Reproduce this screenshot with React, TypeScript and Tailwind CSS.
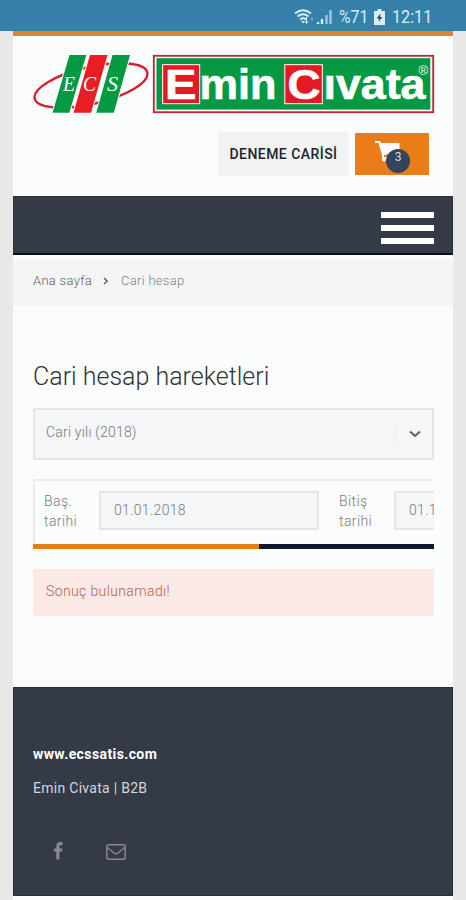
import React from 'react';

const Logo: React.FC = () => (
  <svg className="block h-[60px] w-[402px]" viewBox="33 54 402 60" aria-label="Emin Civata">
    <ellipse
      cx="91"
      cy="85.5"
      rx="57.8"
      ry="18.5"
      fill="none"
      stroke="#d3202b"
      strokeWidth="2.4"
      transform="rotate(-13 91 85.5)"
    />
    <g stroke="#fbfdfc" strokeWidth="2" paintOrder="stroke">
      <path d="M69.5 55H86.3L69.3 112.7H52.5Z" fill="#069944" />
      <path d="M90 55H107.5L91 112.7H73.5Z" fill="#ea1d25" />
      <path d="M112.5 55H130L113.8 112.7H96.3Z" fill="#069944" />
    </g>
    <g fill="#fff" fontFamily="'Liberation Serif', serif" fontStyle="italic" fontSize="20">
      <text x="63" y="90.5" textLength="12" lengthAdjust="spacingAndGlyphs">E</text>
      <text x="83" y="90.5" textLength="13" lengthAdjust="spacingAndGlyphs">C</text>
      <text x="107" y="90.5" textLength="11" lengthAdjust="spacingAndGlyphs">S</text>
    </g>

    <rect x="153.8" y="55.8" width="279.4" height="56.4" fill="#fff" stroke="#c51e2d" strokeWidth="1.8" />
    <rect x="156.5" y="58.2" width="273.8" height="51.4" fill="#069944" />
    <rect x="162.6" y="64.6" width="37" height="39" fill="#e21a25" stroke="#f5e1dc" strokeWidth="1.2" />
    <rect x="284.8" y="64.6" width="37.6" height="39" fill="#e21a25" stroke="#f5e1dc" strokeWidth="1.2" />
    <g
      fill="#fff"
      stroke="#fff"
      strokeWidth="0.6"
      fontFamily="'Liberation Sans', sans-serif"
      fontWeight="700"
      fontSize="42"
    >
      <text x="165" y="98.6" textLength="31.5" lengthAdjust="spacingAndGlyphs">E</text>
      <text x="199.5" y="98.6" textLength="77" lengthAdjust="spacingAndGlyphs">min</text>
      <text x="287.5" y="98.6" textLength="33" lengthAdjust="spacingAndGlyphs">C</text>
      <text x="323.5" y="98.6" textLength="102" lengthAdjust="spacingAndGlyphs">ıvata</text>
    </g>
    <text x="418.5" y="75" fill="#fff" fontFamily="'Liberation Sans', sans-serif" fontSize="13">®</text>
  </svg>
);

const StatusBar: React.FC = () => (
  <div className="flex h-[31px] items-center bg-[#3581ab] pt-[2px] pl-[294px] text-[#d9edf7]">
    <svg className="h-[18px] w-[42px]" viewBox="0 0 42 18" fill="none" stroke="currentColor">
      <path d="M1 5.5Q9-1 17 5.5M3.5 8.5Q9 4 14.5 8.5M6 11.5Q9 9 12 11.5" strokeWidth="1.8" />
      <path d="M7 13H11L9 15.5Z" fill="currentColor" stroke="none" />
      <path d="M12.5 9V15M11 13.5L12.5 15.5L14 13.5" strokeWidth="1" />
      <path d="M18 9V13" strokeWidth="1" opacity=".5" />
      <path d="M24 14V16M28 11V16" strokeWidth="2.4" />
      <path d="M32.5 7V16M36.500 2V16" strokeWidth="2.4" opacity=".65" />
    </svg>
    <span className="ml-[3px] w-[30px] text-[19px] leading-none whitespace-nowrap">
      <span className="inline-block origin-left scale-x-[0.83]">%71</span>
    </span>
    <svg className="ml-[5px] h-[16px] w-[11px]" viewBox="0 0 11 16">
      <path d="M3.5 0h4v2H11v14H0V2h3.5z" fill="currentColor" />
      <path d="M6.5 4.5 2.7 9.5h2.5l-.7 3.5 3.8-5H6z" fill="#263e50" />
    </svg>
    <span className="ml-[7px] inline-block origin-left scale-x-[0.85] text-[19px] leading-none">12:11</span>
  </div>
);

const Header: React.FC = () => (
  <header className="h-[165px] border-t-[5px] border-[#dd8532] pt-[18px] pl-[20px]">
    <Logo />
    <div className="mt-[18px] flex items-start gap-[6px] pl-[185px]">
      <button className="h-[44px] w-[131px] bg-[#f0f2f3] text-[14px] font-medium tracking-[0.45px] whitespace-nowrap text-[#20242b]">
        DENEME CARİSİ
      </button>
      <button className="relative mt-[1px] h-[42px] w-[74px] bg-[#ea7d18]">
        <svg className="absolute top-[7px] left-[20px]" width="26" height="22" viewBox="0 0 26 22" fill="#fff">
          <path d="M0 1h5l1 2h18.5v10L9 15v2h14v2H7v-4L3.5 3H0z" />
          <circle cx="9" cy="19.5" r="2" />
          <circle cx="21" cy="19.5" r="2" />
        </svg>
        <span className="absolute top-[16px] left-[31px] h-[24px] w-[24px] rounded-full bg-[#34445b] text-[12px] leading-[17px] text-[#d5dbe2]">
          3
        </span>
      </button>
    </div>
  </header>
);

const Footer: React.FC = () => (
  <footer className="mt-[71px] h-[209px] border border-[#252c39] bg-[#343a46] pt-[56px] pl-[19px] text-[14px] leading-[20px]">
    <p className="font-bold tracking-[0.4px] text-white">www.ecssatis.com</p>
    <p className="mt-[14px] tracking-[0.28px] text-[#d3d7df]">Emin Civata | B2B</p>
    <div className="mt-[43px] flex items-center text-[#858a94]">
      <svg className="ml-[21px]" width="9" height="18" viewBox="0 0 9 18" fill="currentColor">
        <path d="M8.5.2v3H6.8C5.6 3.2 5.4 3.8 5.4 4.6V6.5h3l-.4 3H5.4V17.5H2.3V9.5H0v-3h2.3V4.3C2.3 1.6 3.9.1 6.3.1c1 0 1.9.1 2.2.1z" />
      </svg>
      <svg className="mt-[3px] ml-[43px]" width="20" height="16" viewBox="0 0 20 16" fill="none" stroke="currentColor">
        <rect x=".8" y=".8" width="18.4" height="14.4" rx="2" strokeWidth="1.5" />
        <path d="M1.2 3.5 8 9Q10 10.6 12 9L18.8 3.5" strokeWidth="1.5" />
      </svg>
    </div>
  </footer>
);

export default function App() {
  return (
    <div className="h-[900px] w-[466px] overflow-hidden bg-[#e8e8e8] font-['Roboto',sans-serif]">
      <StatusBar />
      <div className="ml-[13px] h-[869px] w-[440px] bg-[#fbfdfc]">
        <Header />

        <nav className="flex h-[59px] items-center justify-end border border-b-2 border-[#2a303c] border-b-[#080d18] bg-[#343a46] pt-[5px] pr-[18px]">
          <div className="flex flex-col gap-[7px]">
            <span className="h-[6px] w-[53px] bg-white"></span>
            <span className="h-[6px] w-[53px] bg-white"></span>
            <span className="h-[6px] w-[53px] bg-white"></span>
          </div>
        </nav>

        <div className="mt-[4px] flex h-[47px] items-center bg-[#f4f5f7] pb-[3px] pl-[20px] text-[13px] font-light text-[#5f6266]">
          <span className="w-[70px] tracking-[0.3px]">Ana sayfa</span>
          <svg width="6" height="8" viewBox="0 0 6 8" fill="none" stroke="#555" strokeWidth="1.3">
            <path d="M1 1 4.2 4 1 7" />
          </svg>
          <span className="ml-[12px] tracking-[0.3px] text-[#7d8084]">Cari hesap</span>
        </div>

        <main className="mt-[55px] w-[421px] pl-[20px] font-light">
          <h1 className="text-[25px] leading-[32px] text-[#303235]">Cari hesap hareketleri</h1>

          <div className="mt-[15px] flex h-[52px] items-center border-2 border-[#e3e5e6] bg-[#f5f6f8] pb-[4px] pl-[11px] text-[14px] tracking-[0.2px] text-[#74777b]">
            <span className="flex-1">Cari yılı (2018)</span>
            <span className="mt-[4px] h-[17px] w-px bg-[#e9eaec]"></span>
            <svg className="mt-[4px] mr-[11px] ml-[13px]" width="12" height="8" viewBox="0 0 12 8" fill="none" stroke="#5d6064" strokeWidth="2">
              <path d="M1 1.5 6 6l5-4.5" />
            </svg>
          </div>

          <div className="mt-[19px] flex h-[65px] overflow-hidden border-t-2 border-l-2 border-[#eaecec] pl-[9px] text-[14px] leading-[20px] tracking-[0.4px] text-[#777a7e]">
            <label className="mt-[10px] w-[55px] shrink-0">Baş.<br />tarihi</label>
            <div className="mt-[10px] h-[39px] w-[220px] shrink-0 border-2 border-[#e3e5e6] bg-[#f5f6f8] pl-[13px] leading-[34px] tracking-[0.3px]">
              01.01.2018
            </div>
            <label className="mt-[10px] ml-[20px] w-[55px] shrink-0">Bitiş<br />tarihi</label>
            <div className="mt-[10px] h-[39px] w-[220px] shrink-0 border-2 border-[#e3e5e6] bg-[#f5f6f8] pl-[13px] leading-[34px] tracking-[0.3px]">
              01.1
            </div>
          </div>
          <div className="flex h-[5px]">
            <span className="w-[226px] bg-[#e47e17]"></span>
            <span className="flex-1 bg-[#111a2b]"></span>
          </div>

          <div className="mt-[20px] h-[47px] bg-[#fbe9e8] pl-[13px] text-[14px] leading-[45px] tracking-[0.38px] text-[#b35f50]">
            Sonuç bulunamadı!
          </div>
        </main>

        <Footer />
      </div>
    </div>
  );
}
